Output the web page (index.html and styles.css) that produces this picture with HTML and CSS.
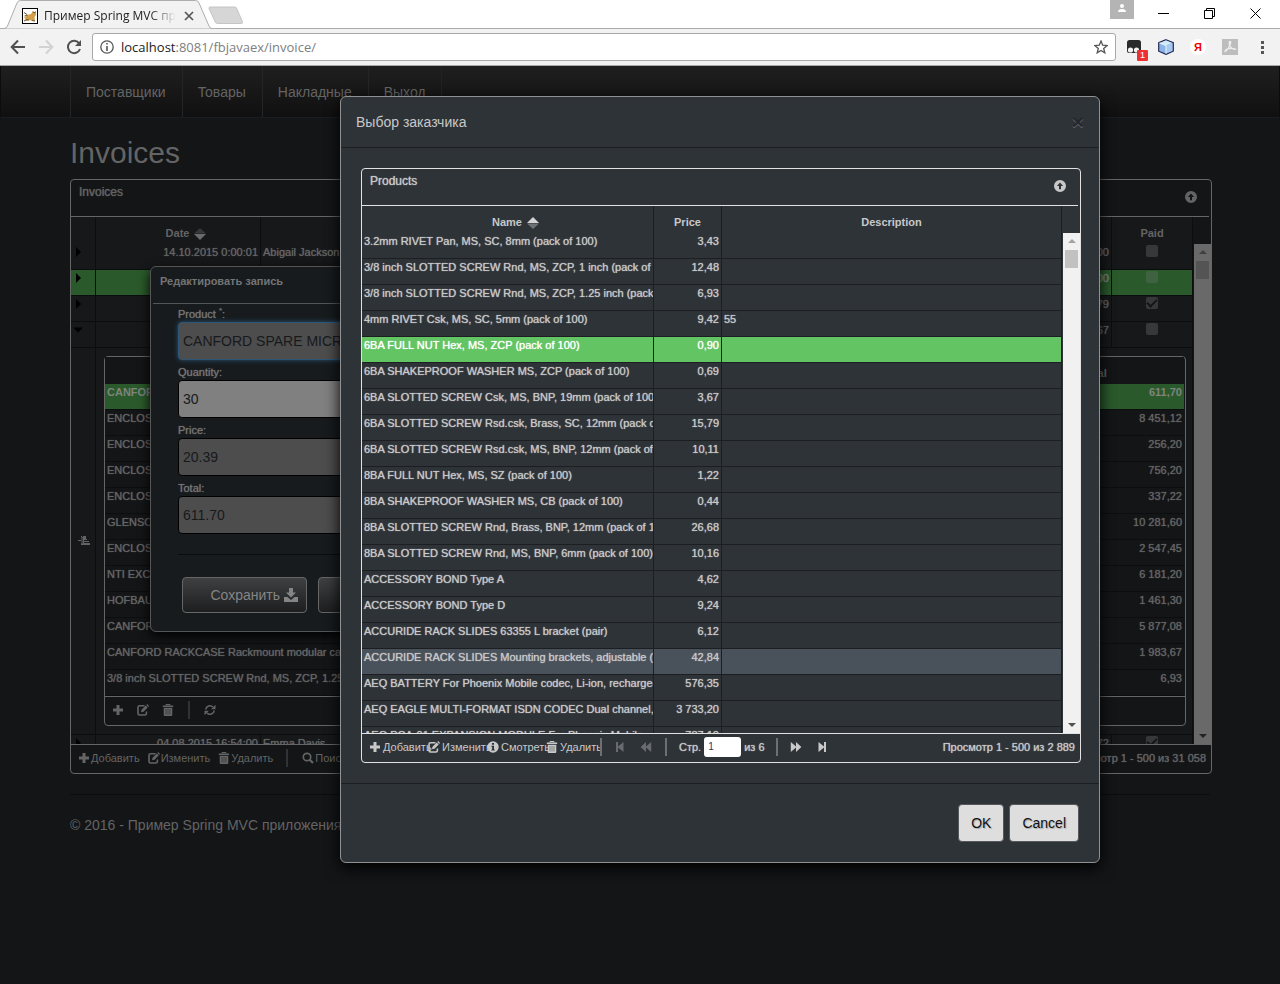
FILE: index.html
```html
<!DOCTYPE html>
<html lang="ru">
<head>
<meta charset="utf-8">
<title>Пример Spring MVC приложения</title>
<link rel="stylesheet" href="styles.css">
</head>
<body>
<svg class="defs" width="0" height="0" aria-hidden="true">
  <symbol id="plus" viewBox="0 0 12 12"><path d="M4.500 1h3v3.500H11v3H7.500V11h-3V7.500H1v-3h3.500z" fill="currentColor"/></symbol>
  <symbol id="edit" viewBox="0 0 12 12"><path d="M7.500 1.800H2.600Q1 1.800 1 3.400v6Q1 11 2.600 11h5.200q1.600 0 1.600-1.600V7.500" fill="none" stroke="currentColor" stroke-width="1.600"/><path d="M4 8.300l.5-2.500L8.700 1.600l2 2L6.500 7.800zM9.300 1l.9-.9 1.900 1.900-.9.9z" fill="currentColor"/></symbol>
  <symbol id="trash" viewBox="0 0 12 12"><path d="M4 1.500V.5h4v1" fill="none" stroke="currentColor"/><path d="M.8 1.600h10.400v1.500H.8zM1.700 3.800h8.600V11q0 1-1 1H2.700q-1 0-1-1z" fill="currentColor"/><path d="M4 5v5.500M6 5v5.500M8 5v5.500" stroke="#000" stroke-opacity=".45" stroke-width=".8"/></symbol>
  <symbol id="search" viewBox="0 0 12 12"><circle cx="5" cy="5" r="3.700" fill="none" stroke="currentColor" stroke-width="1.700"/><path d="M7.600 7.600l3.400 3.400" stroke="currentColor" stroke-width="2.200"/></symbol>
  <symbol id="refresh" viewBox="0 0 12 12"><path d="M1.700 5.500A4.300 4.300 0 0 1 9 3M10.300 6.500A4.300 4.300 0 0 1 3 9" fill="none" stroke="currentColor" stroke-width="1.600"/><path d="M11.500.8v4.400H7.100zM.5 11.200V6.800h4.400z" fill="currentColor"/></symbol>
  <symbol id="info" viewBox="0 0 12 12"><path fill-rule="evenodd" d="M6 .3a5.700 5.700 0 1 1 0 11.400A5.700 5.700 0 0 1 6 .3zM5 2v1.700h2V2zM4.300 4.800v1h.8v2.700h-.8v1h3.400v-1H7V4.800z" fill="currentColor"/></symbol>
  <symbol id="up" viewBox="0 0 12 12"><path fill-rule="evenodd" d="M6 0a6 6 0 1 1 0 12A6 6 0 0 1 6 0zM6 2.600L2.900 6h2.100v3.200h2V6h2.100z" fill="currentColor"/></symbol>
  <symbol id="first" viewBox="0 0 12 12"><path d="M2 1h2v4.600L9.500 1v10L4 6.400V11H2z" fill="currentColor"/></symbol>
  <symbol id="prev" viewBox="0 0 12 12"><path d="M6 1v4.500L11.200 1v10L6 6.500V11L.6 6z" fill="currentColor"/></symbol>
  <symbol id="next" viewBox="0 0 12 12"><path d="M6 1v4.500L.8 1v10L6 6.500V11l5.400-5z" fill="currentColor"/></symbol>
  <symbol id="last" viewBox="0 0 12 12"><path d="M10 1H8v4.600L2.500 1v10L8 6.400V11h2z" fill="currentColor"/></symbol>
  <symbol id="right" viewBox="0 0 12 12"><path d="M4 1l5 5-5 5z" fill="#000"/></symbol>
  <symbol id="down" viewBox="0 0 12 12"><path d="M1 3.500h10L6 8.500z" fill="#000"/></symbol>
  <symbol id="sb-up" viewBox="0 0 8 8"><path d="M4 2l4 4H0z" fill="currentColor"/></symbol>
  <symbol id="sb-down" viewBox="0 0 8 8"><path d="M0 2h8L4 6z" fill="currentColor"/></symbol>
</svg>

<header class="browser">
  <div class="tabstrip">
    <div class="tab">
      <svg class="tab-shape" width="214" height="29" viewBox="0 0 214 29" aria-hidden="true"><path d="M0 28.500h4Q6.500 28.500 7.500 26L17 3Q18 .5 20.500 .5h175q2.500 0 3.500 2.500l10 23q1 2.500 3 2.500h2" fill="#f2f2f2" stroke="#adadad"/></svg>
      <svg class="favicon" width="16" height="16" viewBox="0 0 16 16" aria-hidden="true"><rect x=".5" y=".5" width="15" height="15" fill="#fff" stroke="#000"/><path d="M2 10l3-3 4-1 2-3 1 1.500L14 3v4l-1.500 2 .5 4h-3l-2-1-3 1-3-.5 2-1.500z" fill="#d2a04c"/><path d="M2 4.500l3 2M2 13l3-1.500 2 .5M10 12.500l3 .5M11 3.500l1 1.500 1.500-1M2.500 8l3-1" stroke="#6b5a34" fill="none"/></svg>
      <span class="tab-title">Пример Spring MVC при</span>
      <button class="tab-close" aria-label="Закрыть вкладку"><svg width="10" height="10" viewBox="0 0 10 10"><path d="M1 1l8 8M9 1L1 9" stroke="#555" stroke-width="1.700"/></svg></button>
    </div>
    <button class="newtab" aria-label="Новая вкладка"><svg width="36" height="19" viewBox="0 0 36 19"><path d="M2 1h25q1 0 1.500 1l6 14q.5 1.500-1 1.500H9.500q-1.500 0-2-1L1 2.500Q.5 1 2 1z" fill="#d6d6d6" stroke="#c4c4c4"/></svg></button>
    <div class="window-controls">
      <button class="profile" aria-label="Профиль"><svg width="8" height="9" viewBox="0 0 8 9"><circle cx="4" cy="2" r="2" fill="#fff"/><path d="M0 8q0-3 4-3t4 3z" fill="#fff"/></svg></button>
      <button aria-label="Свернуть"><svg width="11" height="11" viewBox="0 0 11 11"><path d="M0 5.500h11" stroke="#000"/></svg></button>
      <button aria-label="Развернуть"><svg width="11" height="11" viewBox="0 0 11 11"><path d="M.5 2.500h8v8h-8zM2.500 2.500v-2h8v8h-2" fill="none" stroke="#000"/></svg></button>
      <button aria-label="Закрыть"><svg width="11" height="11" viewBox="0 0 11 11"><path d="M.5.5l10 10M10.500.5l-10 10" stroke="#000"/></svg></button>
    </div>
  </div>
  <div class="toolbar">
    <button aria-label="Назад"><svg width="16" height="16" viewBox="0 0 16 16"><path d="M15 8H2M8 1.500L1.700 8 8 14.500" fill="none" stroke="#505050" stroke-width="2"/></svg></button>
    <button aria-label="Вперёд"><svg width="16" height="16" viewBox="0 0 16 16"><path d="M1 8h13M8 1.500L14.300 8 8 14.500" fill="none" stroke="#d2d2d2" stroke-width="2"/></svg></button>
    <button aria-label="Обновить"><svg width="16" height="16" viewBox="0 0 16 16"><path d="M13.300 4.500A6.200 6.200 0 1 0 14 10" fill="none" stroke="#505050" stroke-width="2"/><path d="M15 1v6H9z" fill="#505050"/></svg></button>
    <div class="omnibox">
      <svg width="14" height="14" viewBox="0 0 14 14" aria-hidden="true"><circle cx="7" cy="7" r="6.200" fill="none" stroke="#555" stroke-width="1.300"/><path d="M6.200 3h1.600v1.600H6.200zM6.200 6h1.600v5H6.200z" fill="#555"/></svg>
      <a class="url" href="#"><b>localhost</b>:8081/fbjavaex/invoice/</a>
      <button aria-label="В закладки"><svg width="14" height="14" viewBox="0 0 14 14"><path d="M7 1l1.700 4.200 4.500.3-3.500 2.900 1.100 4.400L7 10.400l-3.800 2.400 1.100-4.400L.8 5.500l4.500-.3z" fill="none" stroke="#555" stroke-width="1.300"/></svg></button>
    </div>
    <div class="extensions">
      <button class="ext" aria-label="Tampermonkey"><svg width="16" height="16" viewBox="0 0 16 16"><path d="M3.500 1h9Q15 1 15 3.500V12q0 2-2 2H3q-2 0-2-2V3.500Q1 1 3.500 1z" fill="#2a2a2a"/><circle cx="4.500" cy="11" r="2.600" fill="#f2f2f2"/><circle cx="10.500" cy="11" r="2.600" fill="#f2f2f2"/></svg><span class="badge">1</span></button>
      <button aria-label="NetBeans"><svg width="16" height="16" viewBox="0 0 16 16"><path d="M8 .7l7.300 3v8.500L8 15.400.7 12.200V3.700z" fill="#8ab4e8" stroke="#252a55" stroke-width="1.200"/><path d="M8 1.400l6.200 2.500L8 6.500 1.800 3.900z" fill="#d3eaf4"/><path d="M8 6.500l6.200-2.600v7.800L8 14.600z" fill="#a9c8ee"/><path d="M1.500 4L8 6.700v8" fill="none" stroke="#e8f6fc"/></svg></button>
      <button class="yandex" aria-label="Яндекс">Я</button>
      <button aria-label="PDF"><svg width="16" height="16" viewBox="0 0 16 16"><path d="M0 0h16v16H0z" fill="#bdbdbd"/><path d="M3 12.500Q5 12 7.500 7T7.500 2.500Q6.500 6 9 8.500t4.500 1.700Q11 9 7 9.700T3 12.500z" fill="none" stroke="#eee" stroke-width="1.200"/></svg></button>
      <button aria-label="Меню"><svg width="16" height="16" viewBox="0 0 16 16"><path d="M7 2h3v3H7zM7 7h3v3H7zM7 12h3v3H7z" fill="#555"/></svg></button>
    </div>
  </div>
</header>

<div class="page">
  <nav class="navbar">
    <ul>
      <li><a href="#">Поставщики</a></li>
      <li><a href="#">Товары</a></li>
      <li><a href="#">Накладные</a></li>
      <li><a href="#">Выход</a></li>
    </ul>
  </nav>

  <main class="container">
    <h1>Invoices</h1>
    <section class="grid dim">
      <div class="grid-title"><span>Invoices</span><button aria-label="Свернуть таблицу"><svg width="12" height="12"><use href="#up"/></svg></button></div>
      <div class="grid-main">
        <div class="grid-view">
          <table>
            <colgroup><col class="c-toggle"><col class="c-date"><col><col class="c-amount"><col class="c-paid"></colgroup>
            <thead><tr><th></th><th class="sorted">Date<svg class="sort" width="12" height="12" viewBox="0 0 12 12"><path d="M6 0l6 5.500H0z" fill="#36383a"/><path d="M0 6h12l-6 6z" fill="#6a6a6a"/></svg></th><th></th><th></th><th>Paid</th></tr></thead>
            <tbody>
              <tr><td class="tog"><svg width="12" height="12"><use href="#right"/></svg></td><td class="num">14.10.2015 0:00:01</td><td>Abigail Jackson</td><td class="num">00</td><td class="chk"><input type="checkbox" aria-label="Paid" disabled></td></tr>
              <tr class="selected"><td class="tog"><svg width="12" height="12"><use href="#right"/></svg></td><td></td><td></td><td class="num">00</td><td class="chk"><input type="checkbox" aria-label="Paid" disabled></td></tr>
              <tr><td class="tog"><svg width="12" height="12"><use href="#right"/></svg></td><td></td><td></td><td class="num">79</td><td class="chk"><input type="checkbox" aria-label="Paid" checked disabled></td></tr>
              <tr><td class="tog"><svg width="12" height="12"><use href="#down"/></svg></td><td></td><td></td><td class="num">67</td><td class="chk"><input type="checkbox" aria-label="Paid" disabled></td></tr>
              <tr class="detail">
                <td class="hand"><svg width="12" height="12" viewBox="0 0 12 12" aria-hidden="true"><path d="M0 5h3V1h1v1h1V1h3v3h1v1H8v1h3v1H8v1h4v2H3V6H0z" fill="#646464"/><path d="M4 2.500v6M8 5.500H6M9 7.500H6" stroke="#16181b"/></svg></td>
                <td colspan="4">
                  <div class="grid sub">
                    <table>
                      <colgroup><col><col class="c-total"></colgroup>
                      <thead><tr><th></th><th>Total</th></tr></thead>
                      <tbody>
                        <tr class="selected"><td>CANFORD</td><td class="num">611,70</td></tr>
                        <tr><td>ENCLOSURE</td><td class="num">8 451,12</td></tr>
                        <tr><td>ENCLOSURE</td><td class="num">256,20</td></tr>
                        <tr><td>ENCLOSURE</td><td class="num">756,20</td></tr>
                        <tr><td>ENCLOSURE</td><td class="num">337,22</td></tr>
                        <tr><td>GLENSOUND</td><td class="num">10 281,60</td></tr>
                        <tr><td>ENCLOSURE</td><td class="num">2 547,45</td></tr>
                        <tr><td>NTI EXCEL</td><td class="num">6 181,20</td></tr>
                        <tr><td>HOFBAUER</td><td class="num">1 461,30</td></tr>
                        <tr><td>CANFORD</td><td class="num">5 877,08</td></tr>
                        <tr><td>CANFORD RACKCASE Rackmount modular case</td><td class="num">1 983,67</td></tr>
                        <tr><td>3/8 inch SLOTTED SCREW Rnd, MS, ZCP, 1.25 inch</td><td class="num">6,93</td></tr>
                      </tbody>
                    </table>
                    <div class="pager">
                      <button aria-label="Добавить"><svg width="12" height="12"><use href="#plus"/></svg></button>
                      <button aria-label="Изменить"><svg width="12" height="12"><use href="#edit"/></svg></button>
                      <button aria-label="Удалить"><svg width="12" height="12"><use href="#trash"/></svg></button>
                      <i class="sep"></i>
                      <button aria-label="Обновить"><svg width="12" height="12"><use href="#refresh"/></svg></button>
                    </div>
                  </div>
                </td>
              </tr>
              <tr><td class="tog"><svg width="12" height="12"><use href="#right"/></svg></td><td class="num">04.08.2015 16:54:00</td><td>Emma Davis</td><td class="num">72</td><td class="chk"><input type="checkbox" aria-label="Paid" checked disabled></td></tr>
            </tbody>
          </table>
        </div>
        <div class="scrollbar"><svg width="8" height="8"><use href="#sb-up"/></svg><i class="thumb"></i><svg class="end" width="8" height="8"><use href="#sb-down"/></svg></div>
      </div>
      <div class="pager">
        <button><svg width="12" height="12"><use href="#plus"/></svg>Добавить</button>
        <button><svg width="12" height="12"><use href="#edit"/></svg>Изменить</button>
        <button><svg width="12" height="12"><use href="#trash"/></svg>Удалить</button>
        <i class="sep"></i>
        <button><svg width="12" height="12"><use href="#search"/></svg>Поиск</button>
        <span class="info">Просмотр 1 - 500 из 31 058</span>
      </div>
    </section>
    <hr>
    <footer>© 2016 - Пример Spring MVC приложения</footer>
  </main>
</div>

<form class="edit-dialog">
  <h2>Редактировать запись</h2>
  <div class="fields">
    <label for="product">Product <sup>*</sup>:</label>
    <input class="focused" id="product" type="text" value="CANFORD SPARE MICR" readonly>
    <label for="quantity">Quantity:</label>
    <input class="editable" id="quantity" type="text" value="30">
    <label for="price">Price:</label>
    <input id="price" type="text" value="20.39" readonly>
    <label for="total">Total:</label>
    <input id="total" type="text" value="611.70" readonly>
  </div>
  <div class="actions">
    <button type="button">Сохранить <svg width="14" height="14" viewBox="0 0 14 14" aria-hidden="true"><path d="M5 0h4v4.500h3L7 9.500l-5-5h3zM0 9h3.500L7 12l3.500-3H14v5H0z" fill="currentColor"/></svg></button>
    <button type="button" aria-label="Отмена"></button>
  </div>
</form>

<section class="modal" role="dialog" aria-labelledby="modal-title">
  <header><h2 id="modal-title">Выбор заказчика</h2><button class="close" aria-label="Закрыть окно">×</button></header>
  <div class="modal-body">
    <div class="grid">
      <div class="grid-title"><span>Products</span><button aria-label="Свернуть таблицу"><svg width="12" height="12"><use href="#up"/></svg></button></div>
      <div class="grid-main">
        <div class="grid-view">
          <table>
            <colgroup><col class="c-name"><col class="c-price"><col></colgroup>
            <thead><tr><th class="sorted">Name<svg class="sort" width="12" height="12" viewBox="0 0 12 12"><path d="M6 0l6 6H0z" fill="#d4d4d4"/><path d="M0 6.500h12L6 12z" fill="#6d7175"/></svg></th><th>Price</th><th>Description</th></tr></thead>
            <tbody>
              <tr><td>3.2mm RIVET Pan, MS, SC, 8mm (pack of 100)</td><td class="num">3,43</td><td></td></tr>
              <tr><td>3/8 inch SLOTTED SCREW Rnd, MS, ZCP, 1 inch (pack of</td><td class="num">12,48</td><td></td></tr>
              <tr><td>3/8 inch SLOTTED SCREW Rnd, MS, ZCP, 1.25 inch (pack</td><td class="num">6,93</td><td></td></tr>
              <tr><td>4mm RIVET Csk, MS, SC, 5mm (pack of 100)</td><td class="num">9,42</td><td>55</td></tr>
              <tr class="selected"><td>6BA FULL NUT Hex, MS, ZCP (pack of 100)</td><td class="num">0,90</td><td></td></tr>
              <tr><td>6BA SHAKEPROOF WASHER MS, ZCP (pack of 100)</td><td class="num">0,69</td><td></td></tr>
              <tr><td>6BA SLOTTED SCREW Csk, MS, BNP, 19mm (pack of 100)</td><td class="num">3,67</td><td></td></tr>
              <tr><td>6BA SLOTTED SCREW Rsd.csk, Brass, SC, 12mm (pack of 100)</td><td class="num">15,79</td><td></td></tr>
              <tr><td>6BA SLOTTED SCREW Rsd.csk, MS, BNP, 12mm (pack of 100)</td><td class="num">10,11</td><td></td></tr>
              <tr><td>8BA FULL NUT Hex, MS, SZ (pack of 100)</td><td class="num">1,22</td><td></td></tr>
              <tr><td>8BA SHAKEPROOF WASHER MS, CB (pack of 100)</td><td class="num">0,44</td><td></td></tr>
              <tr><td>8BA SLOTTED SCREW Rnd, Brass, BNP, 12mm (pack of 100)</td><td class="num">26,68</td><td></td></tr>
              <tr><td>8BA SLOTTED SCREW Rnd, MS, BNP, 6mm (pack of 100)</td><td class="num">10,16</td><td></td></tr>
              <tr><td>ACCESSORY BOND Type A</td><td class="num">4,62</td><td></td></tr>
              <tr><td>ACCESSORY BOND Type D</td><td class="num">9,24</td><td></td></tr>
              <tr><td>ACCURIDE RACK SLIDES 63355 L bracket (pair)</td><td class="num">6,12</td><td></td></tr>
              <tr class="hover"><td>ACCURIDE RACK SLIDES Mounting brackets, adjustable (front)</td><td class="num">42,84</td><td></td></tr>
              <tr><td>AEQ BATTERY For Phoenix Mobile codec, Li-ion, rechargeable</td><td class="num">576,35</td><td></td></tr>
              <tr><td>AEQ EAGLE MULTI-FORMAT ISDN CODEC Dual channel,</td><td class="num">3 733,20</td><td></td></tr>
              <tr><td>AEQ PCA-01 EXPANSION MODULE For Phoenix Mobile</td><td class="num">787,10</td><td></td></tr>
            </tbody>
          </table>
        </div>
        <div class="scrollbar"><svg width="8" height="8"><use href="#sb-up"/></svg><i class="thumb"></i><svg class="end" width="8" height="8"><use href="#sb-down"/></svg></div>
      </div>
      <div class="pager tight">
        <button><svg width="12" height="12"><use href="#plus"/></svg>Добавить</button>
        <button><svg width="12" height="12"><use href="#edit"/></svg>Изменить</button>
        <button><svg width="12" height="12"><use href="#info"/></svg>Смотреть</button>
        <button><svg width="12" height="12"><use href="#trash"/></svg>Удалить</button>
        <i class="sep"></i>
        <button class="nav off" aria-label="Первая страница"><svg width="12" height="12"><use href="#first"/></svg></button>
        <button class="nav off" aria-label="Предыдущая страница"><svg width="12" height="12"><use href="#prev"/></svg></button>
        <i class="sep"></i>
        <div class="page-no"><label for="pg">Стр.</label><input id="pg" type="text" value="1"><span>из 6</span></div>
        <i class="sep"></i>
        <button class="nav" aria-label="Следующая страница"><svg width="12" height="12"><use href="#next"/></svg></button>
        <button class="nav" aria-label="Последняя страница"><svg width="12" height="12"><use href="#last"/></svg></button>
        <span class="info">Просмотр 1 - 500 из 2 889</span>
      </div>
    </div>
  </div>
  <footer><button>OK</button><button>Cancel</button></footer>
</section>
</body>
</html>
```

FILE: styles.css
```css
* { box-sizing: border-box; }

body {
  margin: 0;
  min-height: 100vh;
  position: relative;
  display: flex;
  flex-direction: column;
  background: #131517;
  font: 14px/20px "Liberation Sans", Arial, sans-serif;
  color: #646464;
}

button, input { font: inherit; color: inherit; }
button { padding: 0; border: 0; background: none; }
h1, h2, ul { margin: 0; padding: 0; font-weight: normal; }
a { color: inherit; text-decoration: none; }
.defs { position: absolute; }
svg { flex: none; }

/* Browser window */
.browser { font-family: "Open Sans", "Noto Sans", sans-serif; background: #f2f2f2; border-bottom: 1px solid #a8a8a8; }
.tabstrip { display: flex; height: 29px; background: #fff; box-shadow: inset 0 -1px #adadad; }
.tab { position: relative; display: flex; align-items: center; width: 208px; padding: 2px 14px 0 22px; font-size: 12px; color: #222; }
.tab-shape { position: absolute; left: 0; top: 0; }
.favicon { position: relative; }
.tab-title {
  position: relative;
  flex: 1;
  margin-left: 6px;
  overflow: hidden;
  white-space: nowrap;
  -webkit-mask-image: linear-gradient(90deg, #000 80%, transparent);
  mask-image: linear-gradient(90deg, #000 80%, transparent);
}
.tab-close { position: relative; display: flex; margin-left: 8px; }
.newtab { display: flex; align-items: center; padding-top: 2px; }
.window-controls { display: flex; margin-left: auto; padding-right: 2px; }
.window-controls button { display: flex; align-items: center; justify-content: center; width: 46px; height: 27px; }
.window-controls .profile { width: 24px; height: 19px; margin-right: 6px; padding-bottom: 2px; background: #b4b4b4; }
.toolbar { display: flex; align-items: center; gap: 12px; height: 36px; padding: 0 10px; }
.toolbar button { display: flex; align-items: center; justify-content: center; }
.omnibox { flex: 1; display: flex; align-items: center; gap: 7px; height: 28px; margin-left: -2px; padding: 0 7px; background: #fff; border: 1px solid #a9a9a9; border-radius: 3px; }
.url { flex: 1; font-size: 13px; color: #808080; }
.url b { font-weight: normal; color: #222; }
.extensions { display: flex; gap: 16px; margin-left: -2px; }
.extensions button { width: 16px; height: 16px; }
.ext { position: relative; }
.badge { position: absolute; left: 11px; top: 11px; width: 11px; height: 11px; background: #ee3030; border-radius: 1px; color: #fff; font: 9px/11px "Liberation Sans", sans-serif; }
.toolbar .yandex { border-radius: 8px; background: #fff; color: #e00; font: bold 11px/16px "Liberation Sans", sans-serif; }

/* Page */
.navbar { height: 52px; background: linear-gradient(#1f1f1f, #101011); border: 1px solid #0c0c0d; border-top: 0; border-bottom-color: #1b1c1e; }
.navbar ul { display: flex; gap: 1px; width: max-content; margin-left: 69px; list-style: none; border-right: 1px solid #222; }
.navbar li { border-left: 1px solid #242526; }
.navbar a { display: block; padding: 0 15px; line-height: 52px; height: 51px; }
.container { margin: 0 68px 0 70px; }
h1 { padding: 19px 0 10px; font-size: 30px; line-height: 32px; }
hr { margin: 20px 2px 20px 0; border: 0; border-top: 1px solid #0b0c0e; }
.container footer { white-space: nowrap; }

/* Data grids */
.grid {
  --line: #e2e2e2;
  --rule: #1c1e22;
  --row: #2e3338;
  border: 1px solid var(--line);
  border-radius: 4px;
  font-size: 11px;
  line-height: 16px;
  color: #c8c8c8;
  text-shadow: 0 0 1px;
}
.grid.dim, .grid.sub { --line: #666; --rule: #0c0d0f; --row: #16181a; color: #646464; }
.grid.sub { --row: #131517; padding-right: 1px; background: #131517; }
.grid-title { display: flex; justify-content: space-between; height: 37px; margin-right: 2px; padding: 0 12px 0 8px; border-bottom: 1px solid var(--line); font-size: 12px; line-height: 24px; }
.grid-title button { height: 12px; margin-top: 11px; }
.grid-title svg { display: block; }
.grid-main { display: flex; }
.grid-view { flex: 1; height: 527px; overflow: hidden; }
table { width: 100%; table-layout: fixed; border-collapse: separate; border-spacing: 0; background: var(--row); }
th { height: 27px; padding: 8px 0 3px; line-height: 16px; border-right: 1px solid var(--rule); text-shadow: none; }
td { height: 26px; padding: 0 2px; vertical-align: top; overflow: hidden; white-space: nowrap; border-right: 1px solid var(--rule); border-bottom: 1px solid var(--rule); }
.num { text-align: right; }
.selected td { background: #62c462; color: #fff; }
.dim .selected td { background: #2a5a2b; color: #7e847e; }
.hover td { background: #49515a; }
.sorted { padding-left: 16px; }
.sort { margin-left: 5px; vertical-align: -3px; }
.c-name { width: 292px; }
.c-price { width: 68px; }
.c-toggle { width: 25px; }
.c-date { width: 165px; }
.c-amount { width: 111px; }
.c-paid { width: 81px; }
.c-total { width: 180px; }
.tog svg { display: block; margin: 2px 0 0 -1px; }
.chk { text-align: center; }
.chk input { appearance: none; display: grid; place-items: center; width: 12px; height: 12px; margin: 1px auto; border-radius: 2px; background: #36383a; }
.selected .chk input, .selected input { background: #3f6340; }
.chk input:checked::after { content: ""; width: 4px; height: 8px; margin-bottom: 2px; border: solid #141617; border-width: 0 2px 2px 0; rotate: 45deg; }
.detail > td { padding: 8px 6px 8px 8px; overflow: hidden; }
.detail > .hand { padding: 0 0 0 7px; vertical-align: middle; }
.hand svg { display: block; }
.sub table td, .sub table th { border-right-width: 0; }
.sub .selected td { font-weight: bold; text-shadow: none; }

.scrollbar { display: flex; flex-direction: column; align-items: center; width: 17px; margin: 27px 0 0 1px; padding: 4px 0; background: #f1f1f1; color: #a3a3a3; }
.thumb { width: 13px; height: 18px; margin-top: 5px; background: #c1c1c1; }
.end { margin-top: auto; color: #505050; }
.dim .scrollbar { background: #696969; color: #404040; }
.dim .thumb { background: #545454; }
.dim .end { color: #222; }

.pager { display: flex; align-items: center; height: 29px; padding: 0 5px 3px 7px; border-top: 1px solid var(--line); white-space: nowrap; }
.pager button { display: flex; align-items: center; gap: 1px; margin-right: 8px; }
.sep { width: 2px; height: 18px; background: #6d7073; }
.dim .sep { margin: 0 14px 0 5px; background: #303236; }
.sub .pager { margin-right: -1px; }
.sub .pager button { margin-right: 13px; }
.dim .sub .sep { margin-left: 1px; }
.tight button { width: 59px; margin: 0; gap: 2px; }
.tight .sep { margin-left: -5px; }
.tight .nav { width: 26px; margin: 0; justify-content: center; }
.tight .sep + .nav { margin-left: 5px; }
.tight .nav + .sep, .page-no + .sep { margin-left: 6px; }
.off { color: #686c70; }
.page-no { display: flex; align-items: center; gap: 3px; margin: 0 5px 0 12px; }
.page-no input { width: 37px; height: 20px; padding: 0 4px; border: 0; border-radius: 3px; background: #fff; color: #333366; font-size: 10px; text-shadow: none; }
.info { margin-left: auto; }

/* Edit form */
.edit-dialog { position: absolute; left: 150px; top: 266px; width: 400px; padding: 0 2px 18px; background: #171b1e; border: 1px solid #555; border-radius: 6px; box-shadow: 0 4px 12px #000; font-size: 11px; color: #747474; }
.edit-dialog h2 { padding: 4px 7px 12px; border-bottom: 1px solid #555; font-size: 11px; font-weight: bold; line-height: 20px; }
.fields { display: grid; margin: 0 25px; padding-bottom: 20px; border-bottom: 1px solid #0b0c0e; }
.fields label { height: 20px; line-height: 24px; text-shadow: 0 0 1px; }
.fields label:first-child { height: 18px; line-height: 20px; }
sup { font-size: 8px; line-height: 0; }
.fields input { width: 100%; height: 38px; padding: 0 4px; background: #4d4d4d; border: 1px solid #000; border-radius: 4px; font-size: 14px; color: #17191c; }
.fields .focused { border-color: #2d5677; box-shadow: 0 0 5px #2d5677; }
.fields .editable { background: #808080; }
.actions { display: flex; gap: 11px; padding: 22px 29px 0; }
.actions button { display: flex; align-items: center; justify-content: flex-end; gap: 4px; width: 125px; height: 36px; padding-right: 8px; font-size: 14px; color: #858585; border: 1px solid #666; border-radius: 4px; background: linear-gradient(#3f4041, #1d1e1f); }

/* Product chooser */
.modal { position: absolute; left: 340px; right: 180px; top: 96px; background: #2e3338; border: 1px solid #8f9193; border-radius: 6px; box-shadow: 0 5px 15px #000; color: #c8c8c8; }
.modal header { display: flex; align-items: center; justify-content: space-between; height: 51px; padding: 0 15px; border-bottom: 1px solid #1c1e22; }
.modal h2 { font-size: 14px; }
.close { font-size: 21px; font-weight: bold; color: #25282c; text-shadow: 0 1px #666b6f; }
.modal-body { padding: 20px 18px 20px 20px; }
.modal > footer { display: flex; justify-content: flex-end; gap: 5px; padding: 20px; border-top: 1px solid #1c1e22; }
.modal > footer button { height: 38px; padding: 0 12px; border: 1px solid #54585c; border-radius: 4px; background: #dedede; color: #111; text-shadow: 1px 1px 1px #aaa; }
```
